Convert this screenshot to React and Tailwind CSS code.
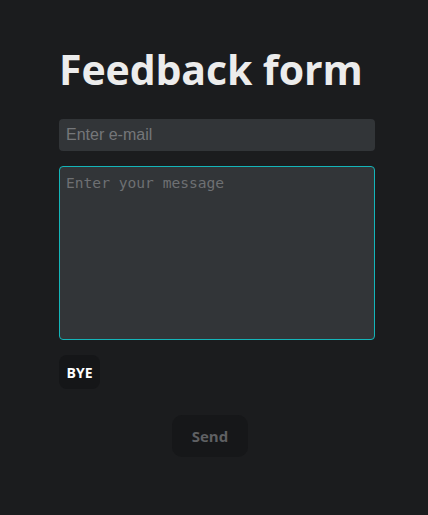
export default function App() {
  return (
    <div className="min-h-[515px] w-full bg-[#1b1c1e] font-['Open_Sans',sans-serif]">
      <div className="ml-[59px] flex w-[316px] flex-col pt-[40px]">
        <h1 className="text-[41px] font-bold leading-[58px] tracking-[-0.1px] text-[#ececec]">
          Feedback form
        </h1>
        <input
          type="email"
          placeholder="Enter e-mail"
          className="mt-[21px] h-[32px] w-full rounded-[4px] bg-[#323538] px-[7px] font-['Liberation_Sans',sans-serif] text-[16px] text-[#ddd] placeholder:text-[#75777a] outline-none"
        />
        <textarea
          placeholder="Enter your message"
          className="mt-[15px] h-[174px] w-full resize-none rounded-[4px] border border-[#14b5b9] bg-[#323538] px-[6px] py-[6px] font-['DejaVu_Sans_Mono',monospace] text-[14.6px] leading-[20px] text-[#ddd] placeholder:text-[#6e7073] outline-none"
        />
        <div className="mt-[15px] flex">
          <button className="h-[34px] w-[41px] rounded-[8px] bg-[#151618] text-[14px] font-bold text-white">
            BYE
          </button>
        </div>
        <div className="mt-[26px] flex pl-[113px]">
          <button className="h-[42px] w-[76px] rounded-[10px] bg-[#161719] text-[15px] font-bold text-[#5f6063]">
            Send
          </button>
        </div>
      </div>
    </div>
  );
}
